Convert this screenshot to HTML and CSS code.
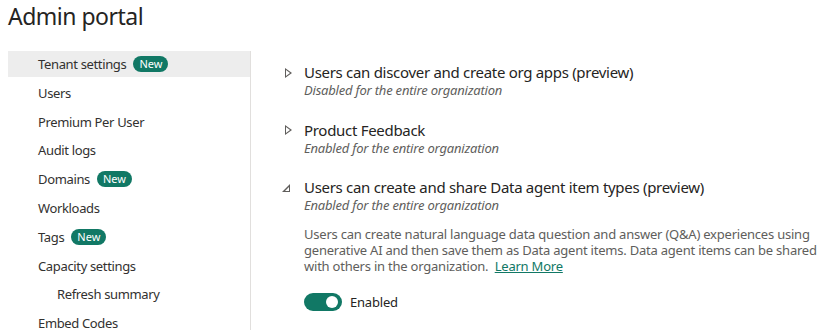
FILE: index.html
```html
<!DOCTYPE html>
<html>
<head>
<title>Admin portal</title>
<link rel="stylesheet" href="styles.css">
</head>
<body>
<h1 class="title">Admin portal</h1>
<div class="layout">
 <ul class="nav">
  <li class="selected">Tenant settings <span class="badge">New</span></li>
  <li>Users</li>
  <li>Premium Per User</li>
  <li>Audit logs</li>
  <li>Domains <span class="badge">New</span></li>
  <li>Workloads</li>
  <li>Tags <span class="badge">New</span></li>
  <li>Capacity settings</li>
  <li class="sub">Refresh summary</li>
  <li>Embed Codes</li>
 </ul>
 <div class="main">
  <div class="setting">
   <div class="head"><span class="chev closed"></span>Users can discover and create org apps (preview)</div>
   <div class="state">Disabled for the entire organization</div>
  </div>
  <div class="setting">
   <div class="head"><span class="chev closed"></span>Product Feedback</div>
   <div class="state">Enabled for the entire organization</div>
  </div>
  <div class="setting">
   <div class="head"><span class="chev open"></span>Users can create and share Data agent item types (preview)</div>
   <div class="state">Enabled for the entire organization</div>
   <p class="desc">Users can create natural language data question and answer (Q&amp;A) experiences using generative AI and then save them as Data agent items. Data agent items can be shared with others in the organization.&nbsp; <a href="#">Learn More</a></p>
   <div class="toggle-row"><span class="toggle"></span>Enabled</div>
  </div>
 </div>
</div>
</body>
</html>
```
FILE: styles.css
```css
body {
 margin: 0;
 font-family: "Noto Sans", "Open Sans", sans-serif;
 color: #252423;
 background: white;
 overflow: hidden;
}
.title {
 margin: 0;
 padding: 0 0 0 8px;
 font-size: 23px;
 letter-spacing: -0.5px;
 font-weight: normal;
 height: 51px;
 line-height: 32px;
}
.layout {
 display: flex;
}
.nav {
 list-style: none;
 margin: 0 0 0 8px;
 padding: 0;
 width: 242px;
 border-right: 1px solid #e1dfdd;
 height: 280px;
}
.nav li {
 height: 26px;
 margin-bottom: 2.8px;
 padding-left: 30px;
 font-size: 13px;
 letter-spacing: -0.35px;
 line-height: 26px;
 color: #323130;
 display: flex;
 align-items: center;
}
.nav li.selected {
 background: #ededed;
}
.nav li.sub {
 padding-left: 49px;
}
.badge {
 display: inline-block;
 margin-left: 7px;
 padding: 0 6px;
 height: 16px;
 line-height: 16px;
 border-radius: 8px;
 background: #117865;
 color: white;
 font-size: 11px;
 letter-spacing: 0;
}
.main {
 padding: 12px 0 0 53px;
}
.setting {
 margin-bottom: 21.5px;
}
.head {
 display: flex;
 align-items: center;
 font-size: 15px;
 letter-spacing: -0.3px;
 line-height: 19px;
 margin-left: -20px;
}
.chev {
 width: 20px;
 height: 12px;
 display: inline-block;
 position: relative;
 flex: none;
}
.chev.closed::before {
 content: "";
 position: absolute;
 left: 1px;
 top: 1px;
 width: 0;
 height: 0;
 border-left: 7px solid #605e5c;
 border-top: 5px solid transparent;
 border-bottom: 5px solid transparent;
}
.chev.closed::after {
 content: "";
 position: absolute;
 left: 2px;
 top: 3px;
 width: 0;
 height: 0;
 border-left: 4px solid white;
 border-top: 3px solid transparent;
 border-bottom: 3px solid transparent;
}
.chev.open::before {
 content: "";
 position: absolute;
 left: -2px;
 top: 2px;
 width: 0;
 height: 0;
 border-right: 8px solid #605e5c;
 border-top: 8px solid transparent;
}
.chev.open::after {
 content: "";
 position: absolute;
 left: 1px;
 top: 5px;
 width: 0;
 height: 0;
 border-right: 4px solid white;
 border-top: 4px solid transparent;
}
.state {
 font-size: 13px;
 font-style: italic;
 letter-spacing: -0.2px;
 color: #605e5c;
 line-height: 17px;
}
.desc {
 margin: 11.5px 0 0;
 width: 515px;
 font-size: 13px;
 letter-spacing: -0.22px;
 line-height: 16px;
 color: #605e5c;
}
.desc a {
 color: #117865;
}
.toggle-row {
 display: flex;
 align-items: center;
 margin-top: 19px;
 font-size: 13px;
 letter-spacing: -0.2px;
}
.toggle {
 width: 38px;
 height: 18px;
 border-radius: 9px;
 background: #117865;
 margin-right: 8px;
 position: relative;
}
.toggle::after {
 content: "";
 position: absolute;
 right: 4px;
 top: 3px;
 width: 12px;
 height: 12px;
 border-radius: 50%;
 background: white;
}
```
